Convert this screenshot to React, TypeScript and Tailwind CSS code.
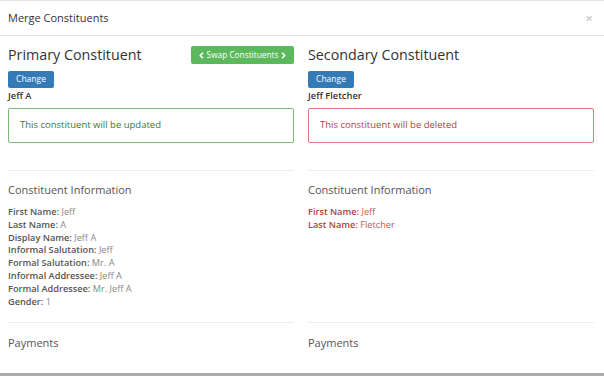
import React from 'react';

type Field = { label: string; value: string };

const primaryFields: Field[] = [
  { label: 'First Name:', value: 'Jeff' },
  { label: 'Last Name:', value: 'A' },
  { label: 'Display Name:', value: 'Jeff A' },
  { label: 'Informal Salutation:', value: 'Jeff' },
  { label: 'Formal Salutation:', value: 'Mr. A' },
  { label: 'Informal Addressee:', value: 'Jeff A' },
  { label: 'Formal Addressee:', value: 'Mr. Jeff A' },
  { label: 'Gender:', value: '1' },
];

const secondaryFields: Field[] = [
  { label: 'First Name:', value: 'Jeff' },
  { label: 'Last Name:', value: 'Fletcher' },
];

function Chevron({ dir }: { dir: 'left' | 'right' }) {
  return (
    <svg width="5" height="7" viewBox="0 0 5 7" className="shrink-0">
      <path
        d={dir === 'left' ? 'M4 0.8 L1.3 3.5 L4 6.2' : 'M1 0.8 L3.7 3.5 L1 6.2'}
        fill="none"
        stroke="white"
        strokeWidth="1.6"
      />
    </svg>
  );
}

function Column({
  title,
  name,
  primary,
  fields,
}: {
  title: string;
  name: string;
  primary: boolean;
  fields: Field[];
}) {
  return (
    <div className="flex flex-col">
      {/* Title row */}
      <div className="mt-[10px] flex h-[18px] items-center justify-between">
        <h3 className="text-[14.3px] leading-[18px] text-[#333]">{title}</h3>
        {primary && (
          <button className="flex h-[18px] w-[103px] items-center justify-center gap-[3px] rounded-[2px] bg-[#5cb85c] text-[8.3px] text-white">
            <Chevron dir="left" />
            <span>Swap Constituents</span>
            <Chevron dir="right" />
          </button>
        )}
      </div>

      <button className="mt-[7px] flex h-[17px] w-[46px] items-center justify-center rounded-[2px] bg-[#337ab7] text-[8.5px] text-white">
        Change
      </button>
      <div className="mt-px h-[14px] text-[9.3px] font-semibold leading-[14px] text-[#333]">{name}</div>

      {/* Alert */}
      {primary ? (
        <div className="mt-[5px] flex h-[35px] items-center rounded-[2px] border border-[#7cb87a] px-[11px] text-[9.5px] text-[#3c763d]">
          This constituent will be updated
        </div>
      ) : (
        <div className="mt-[5px] flex h-[35px] items-center rounded-[2px] border border-[#d47a78] px-[11px] text-[9.5px] text-[#a94442]">
          This constituent will be deleted
        </div>
      )}

      <div className="mt-[27px] h-px bg-[#eee]" />

      {/* Constituent info */}
      <div className="h-[151px]">
        <h4 className="mt-[11px] text-[11px] leading-4 text-[#555]">Constituent Information</h4>
        <div className="mt-[8px] text-[9.2px] leading-[12.8px]">
          {fields.map((f) => (
            <div key={f.label}>
              <span className={primary ? 'font-semibold text-[#555]' : 'font-semibold text-[#a94442]'}>
                {f.label}
              </span>{' '}
              <span className={primary ? 'text-[#888]' : 'text-[#b85c5a]'}>{f.value}</span>
            </div>
          ))}
        </div>
      </div>

      <div className="h-px bg-[#eee]" />
      <h4 className="mt-[12px] text-[11px] leading-4 text-[#555]">Payments</h4>
    </div>
  );
}

export default function App() {
  return (
    <div className="relative h-[376px] w-[604px] overflow-hidden border-t border-b-[3px] border-t-[#e5e5e5] border-b-[#aaa] bg-white font-['Open_Sans',sans-serif]">
      <div className="flex h-[35px] items-center justify-between border-b border-[#e5e5e5] pl-2 pr-[11px]">
        <span className="text-[11px] text-[#333]">Merge Constituents</span>
        <span className="text-[13px] font-bold leading-none text-[#cfcfcf]">×</span>
      </div>
      <div className="grid grid-cols-[286px_286px] gap-x-[14px] px-2">
        <Column title="Primary Constituent" name="Jeff A" primary fields={primaryFields} />
        <Column title="Secondary Constituent" name="Jeff Fletcher" primary={false} fields={secondaryFields} />
      </div>
    </div>
  );
}
